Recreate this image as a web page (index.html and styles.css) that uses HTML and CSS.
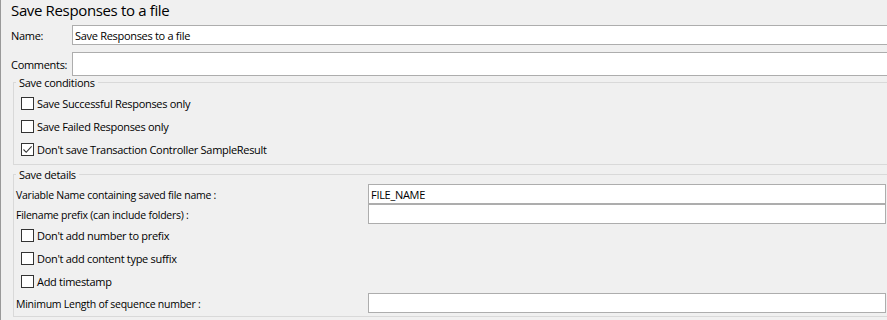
FILE: index.html
```html
<!DOCTYPE html>
<html lang="en">
<head>
  <meta charset="UTF-8" />
  <title>Save Responses to a file</title>
  <link rel="stylesheet" href="styles.css">
</head>
<body>
  <div class="panel">
    <h1 class="title">Save Responses to a file</h1>

    <div class="field-row name-row">
      <label class="field-label">Name:</label>
      <input class="text-input wide" type="text" value="Save Responses to a file">
    </div>
    <div class="field-row comments-row">
      <label class="field-label">Comments:</label>
      <input class="text-input wide tall" type="text">
    </div>

    <fieldset class="group conditions">
      <legend>Save conditions</legend>
      <label class="check-row">
        <span class="box"></span>Save Successful Responses only
      </label>
      <label class="check-row">
        <span class="box"></span>Save Failed Responses only
      </label>
      <label class="check-row">
        <span class="box">
          <svg width="11" height="11" viewBox="0 0 11 11"><path d="M1.5 5.5 L4.2 8.3 L9.6 2.4" fill="none" stroke="#333" stroke-width="1.1"/></svg>
        </span>Don't save Transaction Controller SampleResult
      </label>
    </fieldset>

    <fieldset class="group details">
      <legend>Save details</legend>
      <div class="detail-row">
        <span class="detail-label">Variable Name containing saved file name :</span>
        <input class="text-input detail-input" type="text" value="FILE_NAME">
      </div>
      <div class="detail-row">
        <span class="detail-label">Filename prefix (can include folders) :</span>
        <input class="text-input detail-input" type="text">
      </div>
      <label class="check-row">
        <span class="box"></span>Don't add number to prefix
      </label>
      <label class="check-row">
        <span class="box"></span>Don't add content type suffix
      </label>
      <label class="check-row">
        <span class="box"></span>Add timestamp
      </label>
      <div class="detail-row">
        <span class="detail-label">Minimum Length of sequence number :</span>
        <input class="text-input detail-input" type="text">
      </div>
    </fieldset>
  </div>
</body>
</html>
```
FILE: styles.css
```css
* {
  box-sizing: border-box;
  margin: 0;
  padding: 0;
}

html, body {
  height: 100%;
  overflow: hidden;
}

body {
  background-color: #f0f0f0;
  color: #000;
  font-family: "Open Sans", Arial, sans-serif;
  font-size: 11px;
  letter-spacing: -0.3px;
}

.panel {
  width: 900px;
  height: 100%;
  border-left: 1px solid #999;
}

.title {
  font-size: 15px;
  font-weight: normal;
  letter-spacing: -0.35px;
  line-height: 21px;
  padding-left: 10px;
  margin-bottom: 4px;
}

.field-row {
  display: flex;
  align-items: center;
  padding-left: 10px;
}

.name-row {
  height: 20px;
  margin-bottom: 7px;
}

.comments-row {
  height: 24px;
}

.field-label {
  width: 61px;
  flex-shrink: 0;
}

.text-input {
  font: inherit;
  letter-spacing: inherit;
  color: #000;
  background: #fff;
  border: 1px solid #adadad;
  padding: 0 2px;
  height: 20px;
  outline: none;
}

.wide {
  width: 840px;
}

.tall {
  height: 24px;
}

.group {
  margin-left: 12px;
  border: 1px solid #d9d9d9;
  padding: 3px 0 3px 2px;
}

.group legend {
  padding: 0 3px;
  line-height: 13px;
}

.details {
  margin-top: 3px;
}

.check-row {
  display: flex;
  align-items: center;
  height: 23px;
  padding-left: 5px;
}

.box {
  width: 13px;
  height: 13px;
  border: 1px solid #333;
  background: #fff;
  margin-right: 3px;
  display: flex;
  align-items: center;
  justify-content: center;
  flex-shrink: 0;
}

.detail-row {
  display: flex;
  align-items: center;
  height: 20px;
}

.detail-label {
  width: 352px;
  flex-shrink: 0;
  font-size: 10.5px;
  letter-spacing: -0.25px;
  padding-top: 1px;
}

.detail-input {
  width: 518px;
}
```
